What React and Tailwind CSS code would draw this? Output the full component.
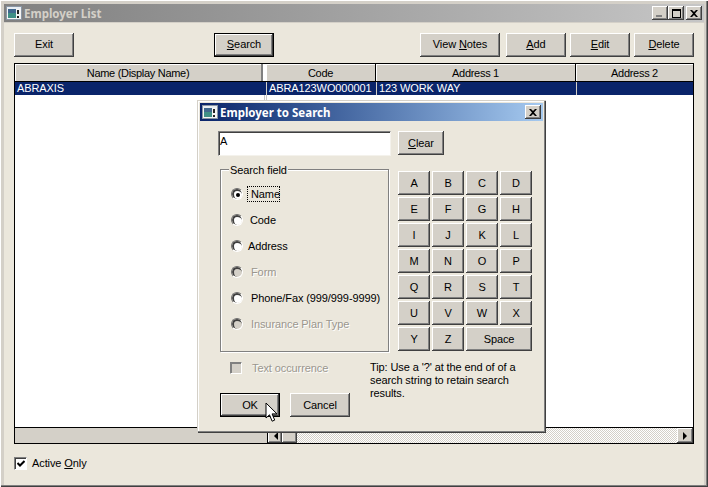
const raised = "shadow-[inset_-1px_-1px_0_#404040,inset_1px_1px_0_#ffffff,inset_-2px_-2px_0_#808080]";

function Btn({ children, className = "", primary = false, pad = "pb-px" }) {
  if (primary) {
    return (
      <div className={`flex items-center justify-center bg-[#d4d0c8] border border-black shadow-[inset_-1px_-1px_0_#404040,inset_1px_1px_0_#ffffff,inset_-2px_-2px_0_#808080] ${pad} ${className}`}>
        {children}
      </div>
    );
  }
  return (
    <div className={`flex items-center justify-center bg-[#d4d0c8] ${raised} ${pad} ${className}`}>
      {children}
    </div>
  );
}

function WinIcon() {
  return (
    <svg width="16" height="14" viewBox="0 0 16 14" className="shrink-0">
      <rect x="0.5" y="0.5" width="15" height="13" fill="#f4f4f4" stroke="#8a96a4" />
      <rect x="1" y="1" width="14" height="2" fill="#e8eef4" />
      <rect x="2" y="3" width="8" height="9" fill="#3f8f86" />
      <rect x="2" y="3" width="8" height="4" fill="#40688f" />
      <rect x="11" y="4" width="2" height="4" fill="#222222" />
      <rect x="11" y="10" width="2" height="2" fill="#222222" />
    </svg>
  );
}

function CapBtn({ children }) {
  return (
    <div className={`w-4 h-[14px] bg-[#d4d0c8] ${raised} flex items-center justify-center`}>
      {children}
    </div>
  );
}

function CloseGlyph() {
  return (
    <svg width="8" height="7" viewBox="0 0 8 7">
      <path d="M0 0h2l2 2 2-2h2L5 3.5 8 7H6L4 5 2 7H0l3-3.5z" fill="#000000" />
    </svg>
  );
}

function Radio({ on, disabled }) {
  return (
    <div className="w-3 h-3 rounded-full border border-t-[#6e6e6e] border-l-[#6e6e6e] border-r-white border-b-white shrink-0 flex items-center justify-center overflow-hidden">
      <div className={`w-[10px] h-[10px] rounded-full flex items-center justify-center border-t-2 border-l-2 border-t-[#404040] border-l-[#404040] ${disabled ? "bg-[#d4d0c8]" : "bg-white"}`}>
        {on && <div className="w-[4px] h-[4px] rounded-full bg-black" />}
      </div>
    </div>
  );
}

const Head = ({ children, className = "" }) => (
  <div className={`h-[17px] bg-[#d4d0c8] flex items-center justify-center tracking-[-0.3px] shadow-[inset_1px_1px_0_#ffffff] ${className}`}>
    {children}
  </div>
);

const letters = ["A","B","C","D","E","F","G","H","I","J","K","L","M","N","O","P","Q","R","S","T","U","V","W","X","Y","Z"];

export default function App() {
  return (
    <div className="relative w-[708px] h-[487px] overflow-hidden flex flex-col bg-[#d4d0c8] text-[11px] leading-[14px] tracking-[-0.1px] text-black [font-family:'Liberation_Sans',Arial,sans-serif] pt-1 pl-1 pr-1 pb-[2px] shadow-[inset_1px_1px_0_#ffffff,inset_-1px_-1px_0_#404040,inset_-2px_-2px_0_#808080]">
      <div className="h-[18px] shrink-0 flex items-center pl-[2px] pr-[2px] bg-gradient-to-r from-[#808080] to-[#c6c6c6]">
        <WinIcon />
        <span className="ml-[2px] pt-px font-bold text-[11.5px] tracking-normal text-[#d4d0c8] [font-family:'Noto_Sans',sans-serif]">Employer List</span>
        <div className="ml-auto flex">
          <CapBtn>
            <div className="w-[6px] h-[2px] bg-[#808080] mt-[6px] mr-[2px]" />
          </CapBtn>
          <CapBtn>
            <div className="w-[9px] h-[9px] border border-black border-t-2" />
          </CapBtn>
          <div className="ml-[2px]">
            <CapBtn><CloseGlyph /></CapBtn>
          </div>
        </div>
      </div>

      <div className="flex-1 mt-px bg-[#ebe7dc] flex flex-col pl-[10px] pr-[10px]">
        <div className="mt-[10px] h-6 flex shrink-0">
          <Btn pad="pb-[2px]" className="w-[60px]">Exit</Btn>
          <Btn pad="pb-[2px]" primary className="w-[60px] ml-[140px]"><span><u>S</u>earch</span></Btn>
          <Btn pad="pb-[2px]" className="w-20 ml-auto"><span>View <u>N</u>otes</span></Btn>
          <Btn pad="pb-[2px]" className="w-[60px] ml-[6px]"><span><u>A</u>dd</span></Btn>
          <Btn pad="pb-[2px]" className="w-[60px] ml-1"><span><u>E</u>dit</span></Btn>
          <Btn pad="pb-[2px]" className="w-[60px] ml-1"><span><u>D</u>elete</span></Btn>
        </div>

        <div className="mt-[6px] w-[680px] h-[381px] border border-black bg-white flex flex-col shrink-0">
          <div className="flex shrink-0 bg-black border-b border-black">
            <Head className="w-[248px] border-r-2 border-r-[#808080]">Name (Display Name)</Head>
            <div className="w-[3px] bg-white" />
            <Head className="w-[109px]">Code</Head>
            <div className="w-px" />
            <Head className="w-[199px]">Address 1</Head>
            <div className="w-px" />
            <Head className="flex-1">Address 2</Head>
          </div>
          <div className="h-[13px] flex shrink-0 bg-[#0a246a] text-white leading-[13px]">
            <div className="w-[251px] pl-[2px]">ABRAXIS</div>
            <div className="w-px bg-[#d4d0c8]" />
            <div className="w-[109px] pl-[2px] whitespace-nowrap">ABRA123WO000001</div>
            <div className="w-px bg-[#d4d0c8]" />
            <div className="w-[199px] pl-[2px]">123 WORK WAY</div>
            <div className="w-px bg-[#d4d0c8]" />
            <div className="flex-1" />
          </div>
          <div className="flex-1 flex">
            <div className="w-[249px]" />
            <div className="w-px bg-[#c8c8c8]" />
            <div className="w-px" />
            <div className="w-px bg-[#c8c8c8]" />
          </div>
          <div className="h-4 flex shrink-0 border-t border-black">
            <div className="w-[252px] bg-[#d4d0c8]" />
            <div className={`w-[15px] bg-[#d4d0c8] ${raised} flex items-center justify-center border-l border-l-black`}>
              <svg width="5" height="8" viewBox="0 0 5 8"><path d="M5 0v8L1 4z" fill="#000000" /></svg>
            </div>
            <div className={`w-[15px] bg-[#d4d0c8] ${raised}`} />
            <div className="flex-1 bg-[repeating-conic-gradient(#d4d0c8_0_25%,#ffffff_0_50%)] bg-[length:2px_2px]" />
            <div className={`w-[16px] bg-[#d4d0c8] ${raised} flex items-center justify-center`}>
              <svg width="5" height="8" viewBox="0 0 5 8"><path d="M0 0v8l4-4z" fill="#000000" /></svg>
            </div>
          </div>
        </div>

        <div className="mt-[12px] flex items-center h-[14px] shrink-0">
          <div className="w-[13px] h-[13px] border border-t-[#808080] border-l-[#808080] border-r-white border-b-white bg-white flex items-center justify-center shadow-[inset_1px_1px_0_#404040]">
            <svg width="8" height="7" viewBox="0 0 8 7"><path d="M0.5 3l2.5 2.5L7.5 1" fill="none" stroke="#000000" strokeWidth="2" /></svg>
          </div>
          <span className="ml-[5px]">Active <u>O</u>nly</span>
        </div>
      </div>

      {/* Dialog */}
      <div className="absolute left-[197px] top-[100px] w-[349px] h-[333px] bg-[#ebe7dc] flex flex-col p-[3px] shadow-[inset_1px_1px_0_#d4d0c8,inset_-1px_-1px_0_#404040,inset_-2px_-2px_0_#808080,inset_2px_2px_0_#ffffff]">
        <div className="h-[18px] shrink-0 flex items-center pl-[2px] pr-[2px] bg-gradient-to-r from-[#0a246a] to-[#a6caf0]">
          <WinIcon />
          <span className="ml-[2px] pt-px font-bold text-[11.5px] tracking-normal text-white [font-family:'Noto_Sans',sans-serif]">Employer to Search</span>
          <div className="ml-auto"><CapBtn><CloseGlyph /></CapBtn></div>
        </div>

        <div className="flex flex-col pl-[18px]">
          <div className="flex mt-[10px] items-start">
            <div className="w-[173px] h-[25px] bg-white pl-px pt-[2px] border border-t-[#808080] border-l-[#808080] border-r-[#f4f2ec] border-b-[#f4f2ec] shadow-[inset_1px_1px_0_#404040]">A</div>
            <Btn className="w-[46px] h-6 ml-[7px]"><span><u>C</u>lear</span></Btn>
          </div>

          <div className="flex mt-[13px]">
            <div className="relative ml-[2px] w-[169px] h-[183px] border border-[#808080] shadow-[1px_1px_0_#ffffff,inset_1px_1px_0_#ffffff] flex flex-col pl-[10px] pt-[11px]">
              <span className="absolute left-2 -top-[7px] px-px bg-[#ebe7dc]">Search field</span>
              <div className="h-[26px] flex items-center">
                <Radio on />
                <span className="ml-[4px] px-[3px] h-[16px] w-[33px] flex items-center border border-dotted border-black whitespace-nowrap">Name</span>
              </div>
              <div className="h-[26px] flex items-center"><Radio /><span className="ml-[7px]">Code</span></div>
              <div className="h-[26px] flex items-center"><Radio /><span className="ml-[5px]">Address</span></div>
              <div className="h-[26px] flex items-center text-[#9a968e] [text-shadow:1px_1px_0_#ffffff]"><Radio disabled /><span className="ml-[8px]">Form</span></div>
              <div className="h-[26px] flex items-center"><Radio /><span className="ml-[8px] whitespace-nowrap">Phone/Fax (999/999-9999)</span></div>
              <div className="h-[26px] flex items-center text-[#9a968e] [text-shadow:1px_1px_0_#ffffff]"><Radio disabled /><span className="ml-[8px]">Insurance Plan Type</span></div>
            </div>

            <div className="ml-[9px] mt-[2px] grid grid-cols-[32px_32px_32px_32px] auto-rows-[24px] gap-[2px] h-fit">
              {letters.map((l) => (
                <Btn key={l}>{l}</Btn>
              ))}
              <Btn className="col-span-2">Space</Btn>
            </div>
          </div>

          <div className="flex mt-[9px]">
            <div className="flex flex-col ml-[2px] w-[150px]">
              <div className="flex items-center h-[14px] text-[#9a968e] [text-shadow:1px_1px_0_#ffffff] ml-[10px]">
                <div className="w-3 h-3 border border-t-[#808080] border-l-[#808080] border-r-white border-b-white bg-[#d4d0c8] shadow-[inset_1px_1px_0_#808080]" />
                <span className="ml-[10px] whitespace-nowrap">Text occurrence</span>
              </div>
              <div className="flex mt-[18px]">
                <Btn primary className="w-[60px] h-6 shrink-0">OK</Btn>
                <Btn className="w-[60px] h-6 ml-[10px] shrink-0">Cancel</Btn>
              </div>
            </div>
            <p className="w-[150px] leading-[13px]">Tip: Use a '?' at the end of of a search string to retain search results.</p>
          </div>
        </div>
      </div>

      {/* Mouse cursor */}
      <svg width="13" height="21" viewBox="0 0 13 21" className="absolute left-[265px] top-[402px]">
        <path d="M1 1v15l3.5-3.2 2.6 6.4 2.6-1.1-2.6-6.2H12z" fill="#ffffff" stroke="#000000" strokeWidth="1" />
      </svg>
    </div>
  );
}
